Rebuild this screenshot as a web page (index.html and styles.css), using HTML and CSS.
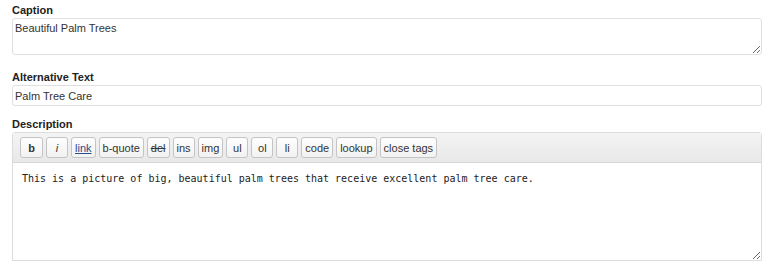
FILE: index.html
```html
<!doctype html>
<html lang="en">
  <head>
    <meta charset="UTF-8" />
    <title>Media details</title>
    <link rel="stylesheet" href="styles.css">
  </head>
  <body>
    <div class="media-form">
      <div class="field field-caption">
        <label class="field-label" for="caption">Caption</label>
        <textarea id="caption" class="field-textarea">Beautiful Palm Trees</textarea>
      </div>

      <div class="field">
        <label class="field-label" for="alt">Alternative Text</label>
        <input id="alt" class="field-input" type="text" value="Palm Tree Care">
      </div>

      <div class="field">
        <label class="field-label" for="description">Description</label>
        <div class="editor">
          <div class="quicktags">
            <button class="qt-button qt-bold">b</button>
            <button class="qt-button qt-italic">i</button>
            <button class="qt-button qt-link">link</button>
            <button class="qt-button">b-quote</button>
            <button class="qt-button qt-del">del</button>
            <button class="qt-button">ins</button>
            <button class="qt-button">img</button>
            <button class="qt-button">ul</button>
            <button class="qt-button">ol</button>
            <button class="qt-button">li</button>
            <button class="qt-button">code</button>
            <button class="qt-button">lookup</button>
            <button class="qt-button">close tags</button>
          </div>
          <textarea id="description" class="editor-area">This is a picture of big, beautiful palm trees that receive excellent palm tree care.</textarea>
        </div>
      </div>
    </div>
  </body>
</html>
```

FILE: styles.css
```css
* {
  box-sizing: border-box;
}

body {
  margin: 0;
  background: #fff;
  font-family: "Liberation Sans", Arial, sans-serif;
  color: #333;
}

.media-form {
  padding: 3px 12px 0 12px;
}

.field {
  display: flex;
  flex-direction: column;
  margin-bottom: 11px;
}

.field-caption {
  margin-bottom: 15px;
}

.field-label {
  font-size: 11px;
  font-weight: bold;
  color: #222;
  line-height: 14px;
  margin-bottom: 1px;
}

.field-textarea,
.field-input {
  font-family: "Liberation Sans", Arial, sans-serif;
  font-size: 11px;
  color: #333;
  border: 1px solid #dfdfdf;
  border-radius: 3px;
  background: #fff;
  margin: 0;
  outline: none;
}

.field-textarea {
  height: 37px;
  padding: 3px 2px;
  resize: vertical;
  line-height: 13px;
}

.field-input {
  height: 21px;
  padding: 2px 2px;
}

.editor {
  border: 1px solid #dcdcdc;
  border-radius: 3px 3px 0 0;
  display: flex;
  flex-direction: column;
}

.quicktags {
  display: flex;
  gap: 3px;
  padding: 4px 7px;
  background: linear-gradient(#f4f4f4, #e8e8e8);
  border-bottom: 1px solid #d6d6d6;
}

.qt-button {
  font-family: "Liberation Sans", Arial, sans-serif;
  font-size: 11px;
  color: #333;
  height: 21px;
  min-width: 22px;
  padding: 0 3px;
  border: 1px solid #c4c4c4;
  border-radius: 3px;
  background: linear-gradient(#fefefe, #f2f2f2);
  cursor: pointer;
}

.qt-bold {
  font-weight: bold;
  min-width: 23px;
}

.qt-italic {
  font-style: italic;
}

.qt-link {
  text-decoration: underline;
  color: #264d8c;
  min-width: 24px;
}

.qt-del {
  text-decoration: line-through;
}

.editor-area {
  font-family: "DejaVu Sans Mono", monospace;
  font-size: 10px;
  color: #222;
  height: 97px;
  border: none;
  margin: 0;
  padding: 10px 9px;
  resize: vertical;
  outline: none;
}
```
